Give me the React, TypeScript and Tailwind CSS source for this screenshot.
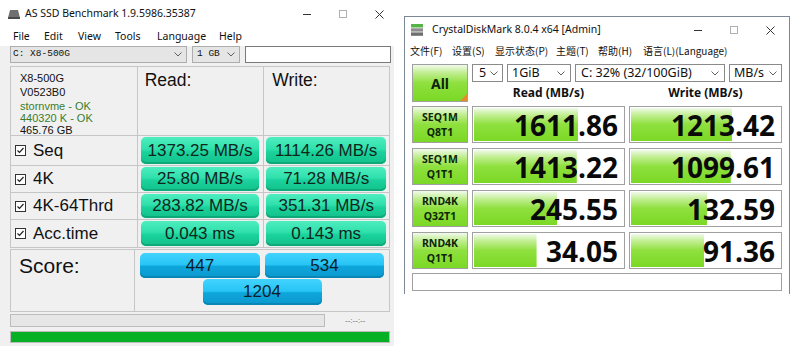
import React from "react";

const asRows = [
  { name: "Seq", read: "1373.25 MB/s", write: "1114.26 MB/s", h: "h-[30px]" },
  { name: "4K", read: "25.80 MB/s", write: "71.28 MB/s", h: "h-[27px]" },
  { name: "4K-64Thrd", read: "283.82 MB/s", write: "351.31 MB/s", h: "h-[27px]" },
  { name: "Acc.time", read: "0.043 ms", write: "0.143 ms", h: "h-[28px]" },
];

const cdmRows = [
  { a: "SEQ1M", b: "Q8T1", read: "1611.86", rp: 70, write: "1213.42", wp: 68 },
  { a: "SEQ1M", b: "Q1T1", read: "1413.22", rp: 69, write: "1099.61", wp: 67 },
  { a: "RND4K", b: "Q32T1", read: "245.55", rp: 56, write: "132.59", wp: 51 },
  { a: "RND4K", b: "Q1T1", read: "34.05", rp: 42, write: "91.36", wp: 49 },
];

function Chevron() {
  return (
    <svg width="8" height="5" viewBox="0 0 8 5" className="shrink-0">
      <path d="M0.5 0.5 L4 4 L7.5 0.5" fill="none" stroke="#606060" strokeWidth="1" />
    </svg>
  );
}

function WinControls({ className }: { className?: string }) {
  return (
    <div className={"flex items-center gap-[28px] " + (className ?? "")}>
      <svg width="8" height="8" viewBox="0 0 8 8">
        <path d="M0 4.5 H8" stroke="#333" strokeWidth="1" />
      </svg>
      <svg width="8" height="8" viewBox="0 0 8 8">
        <rect x="0.5" y="0.5" width="7" height="7" fill="none" stroke="#b0b0b0" strokeWidth="1" />
      </svg>
      <svg width="9" height="9" viewBox="0 0 9 9">
        <path d="M0.5 0.5 L8.5 8.5 M8.5 0.5 L0.5 8.5" stroke="#333" strokeWidth="1" />
      </svg>
    </div>
  );
}

function CheckBox() {
  return (
    <svg width="11" height="11" viewBox="0 0 11 11" className="shrink-0">
      <rect x="0.5" y="0.5" width="10" height="10" fill="#fff" stroke="#333" strokeWidth="1" />
      <path d="M2.5 5.5 L4.5 7.5 L8.5 3" fill="none" stroke="#222" strokeWidth="1.2" />
    </svg>
  );
}

function GreenPill({ children }: { children: React.ReactNode }) {
  return (
    <div className="h-full w-full rounded-[5px] flex items-center justify-center text-[17px] text-[#10261d] bg-[linear-gradient(to_bottom,#4eedbf_0%,#2fe0ab_45%,#1bd29c_55%,#12c08a_100%)] shadow-[inset_0_-2px_0_#0fa878,0_0_1px_#8ff5d6]">
      {children}
    </div>
  );
}

function BluePill({ children, className }: { children: React.ReactNode; className?: string }) {
  return (
    <div
      className={
        "rounded-[5px] flex items-center justify-center text-[17px] text-[#0c1e2a] bg-[linear-gradient(to_bottom,#43d3ff_0%,#27c5f5_47%,#0ea6dc_53%,#0b98cd_100%)] shadow-[inset_0_-2px_0_#0a86b6] " +
        (className ?? "")
      }
    >
      {children}
    </div>
  );
}

function AsSsd() {
  return (
    <div className="w-[394px] h-[346px] shrink-0 bg-[#f0f0f0] flex flex-col font-['Liberation_Sans',Arial,sans-serif] text-[#111]">
      <div className="h-[28px] shrink-0 bg-white flex items-center font-['Noto_Sans',sans-serif]">
        <svg className="ml-[8px] shrink-0" width="12" height="9" viewBox="0 0 12 9">
          <path d="M2 0 H10 L12 8 H0 Z" fill="#707070" />
          <rect x="0" y="7" width="12" height="2" fill="#4a4a4a" />
        </svg>
        <span className="ml-[5px] text-[10.5px]">AS SSD Benchmark 1.9.5986.35387</span>
        <WinControls className="ml-auto mr-[10px]" />
      </div>
      <div className="h-[18px] shrink-0 bg-white flex items-center pl-[13px] text-[10.5px] font-['Noto_Sans',sans-serif]">
        <span className="w-[31px]">File</span>
        <span className="w-[34px]">Edit</span>
        <span className="w-[37px]">View</span>
        <span className="w-[42px]">Tools</span>
        <span className="w-[62px]">Language</span>
        <span>Help</span>
      </div>
      <div className="h-[18px] shrink-0 flex items-start pl-[10px] gap-[5px] font-['Liberation_Mono',monospace] text-[9.5px]">
        <div className="w-[177px] h-[17px] bg-[#e5e5e5] border border-[#adadad] flex items-center pl-[2px] pr-[4px]">
          <span className="flex-1">C: X8-500G</span>
          <Chevron />
        </div>
        <div className="w-[48px] h-[17px] bg-[#e5e5e5] border border-[#adadad] flex items-center pl-[4px] pr-[4px]">
          <span className="flex-1">1 GB</span>
          <Chevron />
        </div>
        <div className="w-[146px] h-[17px] bg-white border border-[#7a7a7a]" />
      </div>

      <div className="ml-[10px] mt-[2px] w-[380px] border-l border-t border-[#c6c6c6]">
        <div className="flex h-[69px] border-b border-[#c6c6c6]">
          <div className="w-[127px] border-r border-[#c6c6c6] pl-[9px] pt-[5px] text-[11px]">
            <div className="leading-[13px]">X8-500G</div>
            <div className="leading-[15px]">V0523B0</div>
            <div className="leading-[12px] text-[#3b7d2c]">stornvme - OK</div>
            <div className="leading-[12px] text-[#3b7d2c]">440320 K - OK</div>
            <div className="leading-[12px]">465.76 GB</div>
          </div>
          <div className="w-[127px] border-r border-[#c6c6c6] pl-[7px] pt-[4px] text-[17.5px] leading-[19px]">Read:</div>
          <div className="w-[126px] border-r border-[#c6c6c6] pl-[8px] pt-[4px] text-[17.5px] leading-[19px]">Write:</div>
        </div>
        {asRows.map((r) => (
          <div key={r.name} className={"flex border-b border-[#c6c6c6] " + r.h}>
            <div className="w-[127px] border-r border-[#c6c6c6] flex items-center pl-[4px] gap-[7px] text-[17px]">
              <CheckBox />
              <span>{r.name}</span>
            </div>
            <div className="w-[127px] border-r border-[#c6c6c6] pl-[3px] pr-[4px] py-[1px]">
              <GreenPill>{r.read}</GreenPill>
            </div>
            <div className="w-[126px] border-r border-[#c6c6c6] pl-[2px] pr-[3px] py-[1px]">
              <GreenPill>{r.write}</GreenPill>
            </div>
          </div>
        ))}
      </div>

      <div className="ml-[10px] mt-[1px] w-[380px] h-[63px] flex border border-[#c6c6c6]">
        <div className="w-[127px] border-r border-[#c6c6c6] pl-[8px] pt-[4px] text-[21px] leading-[24px]">Score:</div>
        <div className="flex-1 flex flex-col pt-[3px] px-[5px]">
          <div className="flex gap-[5px]">
            <BluePill className="w-[120px] h-[25px]">447</BluePill>
            <BluePill className="w-[119px] h-[25px]">534</BluePill>
          </div>
          <BluePill className="w-[119px] h-[26px] mt-[1px] self-center">1204</BluePill>
        </div>
      </div>

      <div className="ml-[10px] mt-[2px] flex items-center">
        <div className="w-[315px] h-[13px] bg-[#e6e6e6] border border-[#bcbcbc]" />
        <span className="ml-[20px] text-[8px] text-[#666]">--:--:--</span>
      </div>
      <div className="ml-[10px] mt-[4px] w-[380px] h-[12px] bg-[#06b025] border border-[#bcbcbc]" />
    </div>
  );
}

const barGrad =
  "bg-[linear-gradient(to_bottom,#f1faeb_0%,#c0ee90_22%,#8fe03e_50%,#7bd825_100%)]";

function Cdm() {
  return (
    <div className="w-[386px] h-[278px] border-x border-t border-[#7b8794] bg-white flex flex-col font-['Noto_Sans','Noto_Sans_CJK_SC',sans-serif] text-[#111]">
      <div className="h-[26px] shrink-0 flex items-center">
        <svg className="ml-[6px] shrink-0" width="12" height="12" viewBox="0 0 12 12">
          <rect x="0" y="0" width="12" height="3.5" fill="#55b445" />
          <rect x="0" y="4.3" width="12" height="3.3" fill="#8c8c8c" />
          <rect x="0" y="8.4" width="12" height="3.4" fill="#6e6e6e" />
        </svg>
        <span className="ml-[9px] text-[10.5px]">CrystalDiskMark 8.0.4 x64 [Admin]</span>
        <WinControls className="ml-auto mr-[14px]" />
      </div>
      <div className="h-[14px] shrink-0 flex items-center pl-[5px] text-[10px] font-['Noto_Sans_CJK_SC',sans-serif]">
        <span className="w-[42px]">文件(F)</span>
        <span className="w-[43px]">设置(S)</span>
        <span className="w-[61px]">显示状态(P)</span>
        <span className="w-[42px]">主题(T)</span>
        <span className="w-[45px]">帮助(H)</span>
        <span>语言(L)(Language)</span>
      </div>
      <div className="px-[7px] pt-[7px] flex flex-col">
        <div className="flex gap-[4px] h-[38px]">
          <div className={"relative w-[56px] h-[38px] border border-[#a0a0a0] flex items-center justify-center text-[14px] font-bold text-[#0d2508] " + barGrad}>
            All
            <svg className="absolute right-0 bottom-0" width="7" height="7" viewBox="0 0 7 7">
              <path d="M7 0 V7 H0 Z" fill="#e8892a" />
            </svg>
          </div>
          <div className="w-[310px] flex flex-col">
            <div className="flex gap-[4px] h-[19px] text-[12.5px]">
              <div className="w-[31px] border border-[#8a8a8a] flex items-center pl-[6px] pr-[4px]">
                <span className="flex-1 leading-none">5</span>
                <Chevron />
              </div>
              <div className="w-[64px] border border-[#8a8a8a] flex items-center pl-[4px] pr-[5px]">
                <span className="flex-1 leading-none">1GiB</span>
                <Chevron />
              </div>
              <div className="w-[150px] border border-[#8a8a8a] flex items-center pl-[5px] pr-[5px]">
                <span className="flex-1 leading-none whitespace-nowrap">C: 32% (32/100GiB)</span>
                <Chevron />
              </div>
              <div className="w-[53px] border border-[#8a8a8a] flex items-center pl-[4px] pr-[4px]">
                <span className="flex-1 leading-none">MB/s</span>
                <Chevron />
              </div>
            </div>
            <div className="flex-1 flex items-center gap-[4px] text-[12px] font-bold pt-[2px]">
              <div className="w-[153px] text-center">Read (MB/s)</div>
              <div className="w-[153px] text-center">Write (MB/s)</div>
            </div>
          </div>
        </div>
        <div className="mt-[4px] flex flex-col gap-[5px]">
          {cdmRows.map((r, i) => (
            <div key={i} className="flex gap-[4px] h-[37px]">
              <div className={"w-[56px] border border-[#a0a0a0] flex flex-col items-center justify-center text-[10.5px] leading-[15px] font-bold text-[#0d2508] " + barGrad}>
                <span>{r.a}</span>
                <span>{r.b}</span>
              </div>
              {[
                { v: r.read, p: r.rp },
                { v: r.write, p: r.wp },
              ].map((c, j) => (
                <div key={j} className="w-[153px] border border-[#a0a0a0] p-[1px]">
                  <div
                    className={"h-full bg-no-repeat flex items-center justify-end pr-[5px] font-['Open_Sans',sans-serif] font-bold text-[28px] leading-none text-[#0a0a0a] " + barGrad}
                    style={{ backgroundSize: `${c.p}% 100%` }}
                  >
                    {c.v}
                  </div>
                </div>
              ))}
            </div>
          ))}
        </div>
        <div className="mt-[4px] h-[18px] border border-[#a0a0a0]" />
      </div>
    </div>
  );
}

export default function App() {
  return (
    <div className="w-[800px] h-[346px] bg-white flex overflow-hidden">
      <AsSsd />
      <div className="pl-[10px] pt-[16px]">
        <Cdm />
      </div>
    </div>
  );
}
